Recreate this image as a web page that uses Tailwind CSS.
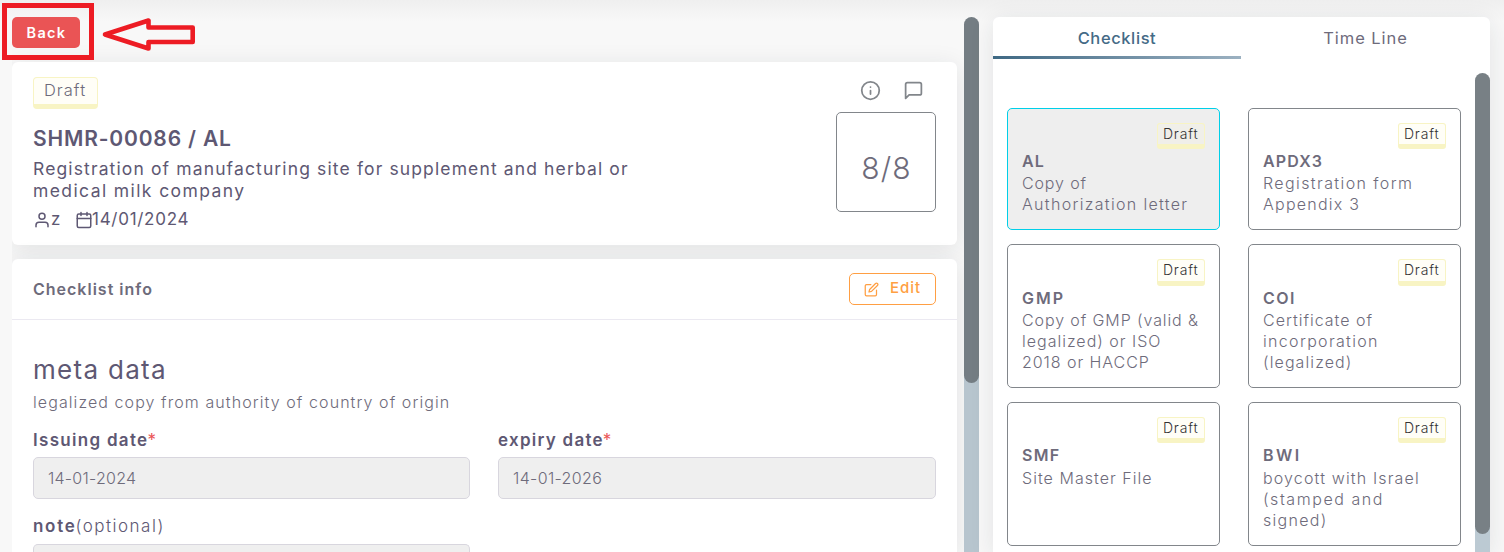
<!DOCTYPE html>
<html lang="en">
<head>
<meta charset="utf-8">
<title>Checklist</title>
<script src="https://cdn.jsdelivr.net/npm/@tailwindcss/browser@4"></script>
</head>
<body class="relative h-[552px] w-[1504px] overflow-hidden bg-[#f8f8f8] font-['Inter',sans-serif] text-[#6e6b7b] whitespace-nowrap">
<div class="flex h-full bg-linear-to-b from-[#efefef] to-transparent bg-[length:100%_22px] bg-no-repeat pl-3">

  <!-- Main column -->
  <main class="flex h-full w-[967px] overflow-hidden pt-[17px]">
    <div class="flex w-[945px] shrink-0 flex-col">
      <button class="h-[31px] w-[68px] shrink-0 rounded-[5px] bg-[#ea5455] pl-px text-[14.5px] leading-[31px] font-semibold tracking-[1.3px] text-white">Back</button>

      <section class="mt-[14px] flex h-[183px] shrink-0 justify-between rounded-md bg-white pl-[21px] pr-[21px] pt-[15px] shadow-[0_4px_24px_rgba(34,41,47,0.1)]">
        <div class="text-[#5e5873]">
          <div class="h-8 w-[65px] rounded-[4px] border border-b-[5px] border-[#f8f4c4] bg-[#fffef7] pl-[10px] text-[16.5px] leading-[25px] font-light tracking-[1px] text-[#6e6b7b]">Draft</div>
          <h1 class="mt-[17px] text-[21px] leading-[26px] font-semibold tracking-[0.83px]">SHMR-00086 / AL</h1>
          <p class="mt-[6px] text-[17.5px] leading-[22px] tracking-[1.13px]">Registration of manufacturing site for supplement and herbal or<br><span class="tracking-[1.4px]">medical milk company</span></p>
          <div class="mt-[5px] flex h-[24px] items-center text-[17px] leading-6">
            <svg class="mt-[2px] size-[18px]" viewBox="0 0 24 24" fill="none" stroke="currentColor" stroke-width="2" stroke-linecap="round" stroke-linejoin="round"><path d="M20 21v-2a4 4 0 0 0-4-4H8a4 4 0 0 0-4 4v2"/><circle cx="12" cy="7" r="4"/></svg>
            <span class="w-[24px]">z</span>
            <svg class="mt-[2px] size-[18px]" viewBox="0 0 24 24" fill="none" stroke="currentColor" stroke-width="2" stroke-linecap="round" stroke-linejoin="round"><rect x="3" y="4" width="18" height="18" rx="2"/><path d="M16 2v4M8 2v4M3 10h18"/></svg>
            <span class="-ml-px tracking-[0.72px]">14/01/2024</span>
          </div>
        </div>
        <div class="flex w-[100px] flex-col">
          <div class="flex h-[35px] gap-[22px] pl-[24px] pt-[3px] text-[#82868b]">
            <svg class="size-[21px]" viewBox="0 0 24 24" fill="none" stroke="currentColor" stroke-width="2" stroke-linecap="round" stroke-linejoin="round"><circle cx="12" cy="12" r="10"/><path d="M12 16v-4M12 8h.01"/></svg>
            <svg class="size-[21px]" viewBox="0 0 24 24" fill="none" stroke="currentColor" stroke-width="2" stroke-linecap="round" stroke-linejoin="round"><path d="M21 15a2 2 0 0 1-2 2H7l-4 4V5a2 2 0 0 1 2-2h14a2 2 0 0 1 2 2z"/></svg>
          </div>
          <div class="flex h-[100px] items-center justify-center rounded-[5px] border border-[#82868b] pt-[13px] pl-px text-[30px] font-light tracking-[1.2px]">8/8</div>
        </div>
      </section>

      <section class="mt-[14px] min-h-0 flex-1 overflow-hidden rounded-t-md bg-white shadow-[0_4px_24px_rgba(34,41,47,0.1)]">
        <header class="flex h-[61px] items-center justify-between border-b border-[#ebe9f1] px-[21px]">
          <h2 class="text-[16px] font-semibold tracking-[1px]">Checklist info</h2>
          <button class="flex h-8 w-[87px] items-center rounded-[5px] border border-[#ff9f43] pl-[14px] text-[15px] font-medium tracking-[1px] text-[#ff9f43]">
            <svg class="mt-px mr-[11px] size-[15px]" viewBox="0 0 24 24" fill="none" stroke="currentColor" stroke-width="2" stroke-linecap="round" stroke-linejoin="round"><path d="M11 4H4a2 2 0 0 0-2 2v14a2 2 0 0 0 2 2h14a2 2 0 0 0 2-2v-7"/><path d="M18.500 2.500a2.121 2.121 0 0 1 3 3L12 15l-4 1 1-4 9.500-9.500z"/></svg>
            <span class="-mt-[2px]">Edit</span>
          </button>
        </header>
        <div class="px-[21px] pt-[34px] text-[#5e5873]">
          <h3 class="text-[26px] leading-8 tracking-[1.3px]">meta data</h3>
          <p class="mt-[6px] text-[16px] leading-5 font-light tracking-[1.08px] text-[#6e6b7b]">legalized copy from authority of country of origin</p>
          <div class="mt-4 flex gap-7">
            <div class="w-[437px]">
              <label class="block text-[17px] leading-6 font-semibold tracking-[1.3px]">Issuing date<span class="-ml-px text-[#ea5455] font-normal">*</span></label>
              <div class="mt-[5px] h-[42px] rounded-[5px] border border-[#d8d6de] bg-[#efefef] pl-[14px] text-[16px] leading-[41px] font-light tracking-[0.25px] text-[#6e6b7b]">14-01-2024</div>
            </div>
            <div class="w-[438px]">
              <label class="block text-[17px] leading-6 font-semibold tracking-[1.26px]">expiry date<span class="-ml-px text-[#ea5455] font-normal">*</span></label>
              <div class="mt-[5px] h-[42px] rounded-[5px] border border-[#d8d6de] bg-[#efefef] pl-[14px] text-[16px] leading-[41px] font-light tracking-[0.35px] text-[#6e6b7b]">14-01-2026</div>
            </div>
          </div>
          <label class="mt-[15px] block text-[17px] leading-6 font-semibold tracking-[1.7px]">note<span class="-ml-px font-light tracking-[1.5px]">(optional)</span></label>
          <div class="mt-[6px] h-[8px] w-[437px] rounded-t-[5px] border border-b-0 border-[#d8d6de] bg-[#efefef]"></div>
        </div>
      </section>
    </div>
    <div class="ml-[7px] h-[535px] w-[15px] shrink-0 rounded-t-lg bg-linear-to-b from-transparent from-50% to-[#b7c5ce] to-50%">
      <div class="h-[366px] rounded-full bg-[#747d83]"></div>
    </div>
  </main>

  <!-- Side panel -->
  <aside class="mt-[17px] ml-[14px] h-[535px] w-[497px] rounded-t-md bg-white shadow-[0_4px_24px_rgba(34,41,47,0.1)]">
    <nav class="flex h-[42px] text-center text-[16.5px] leading-[43px] font-medium">
      <div class="flex w-[248px] flex-col text-[#446a86]">
        <span class="h-[39px] tracking-[0.6px]">Checklist</span>
        <span class="h-[3px] bg-linear-to-r from-[#3f6984] to-[#9cb1c1]"></span>
      </div>
      <div class="w-[249px] tracking-[0.93px] font-normal">Time Line</div>
    </nav>
    <div class="mt-[14px] flex h-[479px]">
      <div class="grid w-[482px] grid-cols-[213px_213px] grid-rows-[122px_144px_144px] gap-x-7 gap-y-[14px] pt-[35px] pl-[14px] text-[16px] leading-[21px] font-light">
        <article class="flex flex-col rounded-[5px] border border-[#00cfe8] bg-[#eeeeee] p-[14px]">
          <span class="h-[26px] w-[48px] self-end rounded-[3px] border border-b-[5px] border-[#f8f4c4] bg-[#f0efe9] pl-[5px] text-[14px] leading-[20px] font-light tracking-[0.8px] text-[#333333]">Draft</span>
          <b class="mt-px mb-px leading-[22px] font-semibold tracking-[1.1px]">AL</b>
          <p class="tracking-[0.86px]">Copy of<br><span class="tracking-[1.32px]">Authorization letter</span></p>
        </article>
        <article class="flex flex-col rounded-[5px] border border-[#82868b] p-[14px]">
          <span class="h-[26px] w-[48px] self-end rounded-[3px] border border-b-[5px] border-[#f8f4c4] bg-[#fffef7] pl-[5px] text-[14px] leading-[20px] font-light tracking-[0.8px] text-[#333333]">Draft</span>
          <b class="mt-px mb-px leading-[22px] font-semibold tracking-[1.2px]">APDX3</b>
          <p class="tracking-[1.4px]">Registration form<br><span class="tracking-[1.25px]">Appendix 3</span></p>
        </article>
        <article class="flex flex-col rounded-[5px] border border-[#82868b] p-[14px]">
          <span class="h-[27px] w-[48px] self-end rounded-[3px] border border-b-[5px] border-[#f8f4c4] bg-[#fffef7] pl-[5px] text-[14px] leading-[20px] font-light tracking-[0.8px] text-[#333333]">Draft</span>
          <b class="mt-px leading-[23px] font-semibold tracking-[2px]">GMP</b>
          <p class="tracking-[0.9px]">Copy of GMP (valid &amp;<br><span class="tracking-[1px]">legalized) or ISO</span><br><span class="tracking-[0.94px]">2018 or HACCP</span></p>
        </article>
        <article class="flex flex-col rounded-[5px] border border-[#82868b] p-[14px]">
          <span class="h-[27px] w-[48px] self-end rounded-[3px] border border-b-[5px] border-[#f8f4c4] bg-[#fffef7] pl-[5px] text-[14px] leading-[20px] font-light tracking-[0.8px] text-[#333333]">Draft</span>
          <b class="mt-px leading-[23px] font-semibold tracking-[1.4px]">COI</b>
          <p class="tracking-[1px]">Certificate of<br><span class="tracking-[1.33px]">incorporation</span><br><span class="tracking-[1.1px]">(legalized)</span></p>
        </article>
        <article class="flex flex-col rounded-[5px] border border-[#82868b] p-[14px]">
          <span class="h-[26px] w-[48px] self-end rounded-[3px] border border-b-[5px] border-[#f8f4c4] bg-[#fffef7] pl-[5px] text-[14px] leading-[20px] font-light tracking-[0.8px] text-[#333333]">Draft</span>
          <b class="mt-px mb-[2px] leading-[22px] font-semibold tracking-[1.3px]">SMF</b>
          <p class="tracking-[1.04px]">Site Master File</p>
        </article>
        <article class="flex flex-col rounded-[5px] border border-[#82868b] p-[14px]">
          <span class="h-[26px] w-[48px] self-end rounded-[3px] border border-b-[5px] border-[#f8f4c4] bg-[#fffef7] pl-[5px] text-[14px] leading-[20px] font-light tracking-[0.8px] text-[#333333]">Draft</span>
          <b class="mt-px mb-[2px] leading-[22px] font-semibold tracking-[2.4px]">BWI</b>
          <p class="tracking-[1.15px]">boycott with Israel<br><span class="tracking-[1.55px]">(stamped and</span><br><span class="tracking-[1.3px]">signed)</span></p>
        </article>
      </div>
      <div class="h-[479px] w-[15px] bg-linear-to-b from-transparent from-50% to-[#bccad3] to-50%">
        <div class="h-[461px] rounded-full bg-[#788085]"></div>
      </div>
    </div>
  </aside>
</div>

<!-- Callout over the Back button -->
<div class="absolute top-[3px] left-[2px] h-[57px] w-[92px] border-[5px] border-[#ed1c24]"></div>
<svg class="absolute top-[15px] left-[100px] h-[40px] w-[100px]" viewBox="100 15 100 40" fill="none" stroke="#ed1c24" stroke-width="4.600" stroke-linejoin="round"><path d="M105 34.500 148.500 20.500V27.500H192.700V42H148.500V48.500Z"/></svg>
</body>
</html>
